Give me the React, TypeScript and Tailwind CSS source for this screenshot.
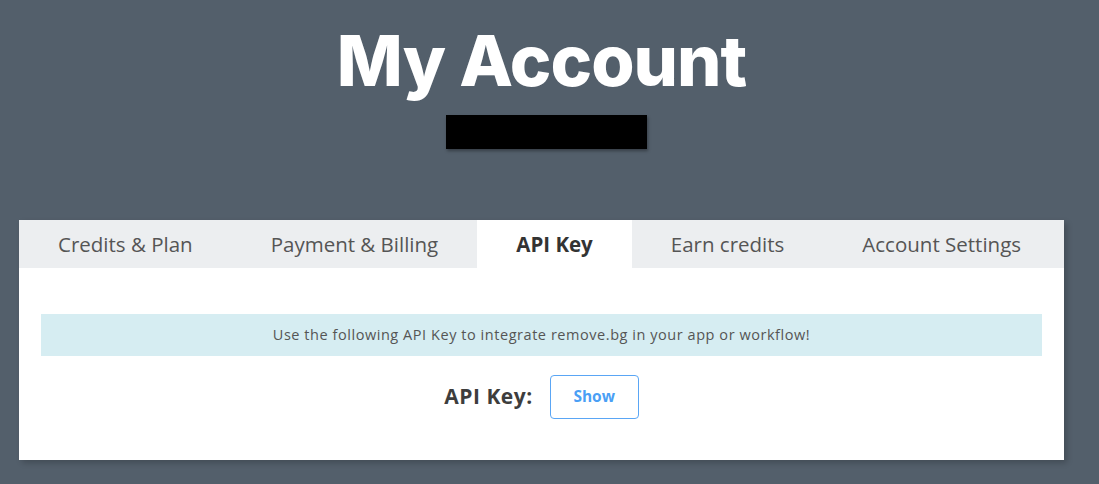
export default function App() {
  const tabs = ['Credits & Plan', 'Payment & Billing', 'API Key', 'Earn credits', 'Account Settings'];
  const active = 'API Key';

  return (
    <div className="min-h-[484px] bg-[#535f6b] pt-[21px] pb-6 font-['Open_Sans',sans-serif]">
      {/* Header */}
      <div className="flex flex-col items-center pr-[16px]">
        <h1 className="font-['Inter',sans-serif] text-[70px] leading-[80px] font-extrabold tracking-[-1px] text-white">
          My Account
        </h1>
        <div className="mt-[14px] ml-[10px] h-[34px] w-[201px] bg-black shadow-[1px_2px_3px_rgba(0,0,0,0.35)]" />
      </div>

      {/* Card */}
      <div className="mt-[71px] ml-[19px] w-[1045px] bg-white shadow-[3px_3px_6px_rgba(0,0,0,0.2)]">
        <div className="flex bg-[#eceef0]">
          {tabs.map((t) => (
            <div
              key={t}
              className={
                t === active
                  ? 'flex h-[48px] shrink-0 items-center whitespace-nowrap bg-white px-[39px] text-[20.5px] font-bold text-[#333]'
                  : 'flex h-[48px] shrink-0 items-center whitespace-nowrap px-[39px] text-[20.5px] text-[#555]'
              }
            >
              {t}
            </div>
          ))}
        </div>

        <div className="px-[22px] pt-[46px] pb-[41px]">
          <div className="flex h-[42px] items-center justify-center bg-[#d6edf2] text-[14.5px] tracking-[0.55px] text-[#555]">
            Use the following API Key to integrate remove.bg in your app or workflow!
          </div>
          <div className="mt-[19px] flex items-center justify-center gap-[17px]">
            <span className="text-[21px] font-bold tracking-[0.5px] text-[#3d3d3d]">API Key:</span>
            <button className="h-[44px] w-[89px] rounded-[4px] border border-[#5aa6f5] bg-white text-[15.5px] font-bold text-[#4a9ff5]">
              Show
            </button>
          </div>
        </div>
      </div>
    </div>
  );
}
